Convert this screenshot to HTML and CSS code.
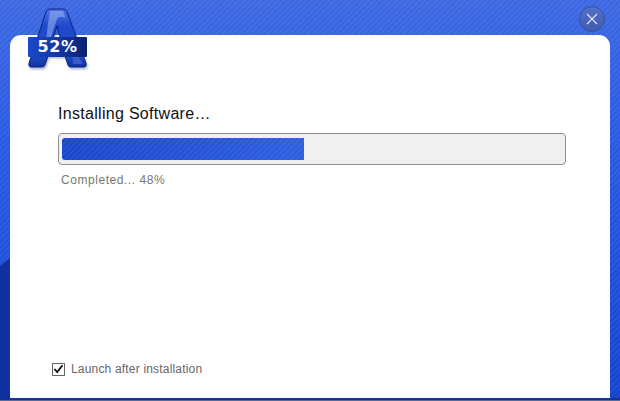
FILE: index.html
```html
<!DOCTYPE html>
<html>
	<head>
		<meta charset="UTF-8" />
		<title>Installing Software</title>
		<link rel="stylesheet" href="styles.css">
	</head>
	<body>
		<div class="window">
			<!-- logo sits over the panel edge -->
			<div class="logo">
				<svg class="logo_a" width="64" height="66" viewBox="0 0 64 66">
					<defs>
						<linearGradient id="aBlue" x1="0" y1="0" x2="0" y2="1">
							<stop offset="0" stop-color="#4d74e2"/>
							<stop offset="0.3" stop-color="#1d48cc"/>
							<stop offset="0.75" stop-color="#2450cf"/>
							<stop offset="1" stop-color="#12339f"/>
						</linearGradient>
					</defs>
					<path d="M24 2 H37 Q40 2 41 5 L60 56 Q61 60 58 60 H45 Q42.500 60 42 58 L39 49 H22 L19 58 Q18.500 60 16 60 H5 Q2 60 3 56 L20 5 Q21 2 24 2 Z M31 19 L23.500 42 H37.500 Z" fill="url(#aBlue)" fill-rule="evenodd" stroke="#0c2480" stroke-width="1"/>
					<path d="M24 4 H37 L39.500 11 Q33 8 31 12 L25 30 L20.500 30 L22 16 Z" fill="#9db4f0" opacity="0.55"/>
					<path d="M46 40 L57 57 L47 57 Z" fill="#5f83e6" opacity="0.45"/>
				</svg>
				<div class="logo_badge">52%</div>
			</div>

			<a href="#" class="btn_close">
				<svg width="12" height="12" viewBox="0 0 12 12">
					<path d="M1 1 L11 11 M11 1 L1 11" stroke="#e4e9fa" stroke-width="1.100" fill="none"/>
				</svg>
			</a>

			<div class="panel">
				<div class="title">Installing Software…</div>
				<div class="track">
					<div class="fill"></div>
				</div>
				<div class="status">Completed... 48%</div>
				<label class="launch">
					<span class="check">
						<svg width="11" height="10" viewBox="0 0 11 10">
							<path d="M1.500 5 L4.200 8 L9.500 1.200" stroke="#111" stroke-width="1.800" fill="none"/>
						</svg>
					</span>
					Launch after installation
				</label>
			</div>
		</div>
	</body>
</html>
```

FILE: styles.css
```css
*{
    box-sizing: border-box;
}

html, body{
    margin: 0;
    padding: 0;
    overflow: hidden;
}

.window{
    position: relative;
    display: flex;
    width: 620px;
    height: 401px;
    padding: 35px 10px 3px;
    font-family: "Liberation Sans", Arial, sans-serif;
    background-color: #1f4ed8;
    background-image:
        repeating-linear-gradient(135deg, rgba(255,255,255,0.05) 0 2px, rgba(255,255,255,0) 2px 4px),
        linear-gradient(180deg, #3d68e2 0, #2b5be2 130px, #1c4dd8 300px, #1442ce 401px);
}

/* darker corner at lower left */
.window::before{
    content: "";
    position: absolute;
    left: 0;
    top: 258px;
    width: 10px;
    height: 143px;
    background: #10309f;
    clip-path: polygon(0 8px, 100% 0, 100% 100%, 0 100%);
}

/* dark line at the bottom of the window */
.window::after{
    content: "";
    position: absolute;
    left: 0;
    right: 0;
    bottom: 0;
    height: 3px;
    background: linear-gradient(180deg, #12339f 0, #12339f 2px, #5a6a90 2px);
}

.panel{
    position: relative;
    display: flex;
    flex-direction: column;
    width: 600px;
    height: 363px;
    padding: 70px 44px 22px 48px;
    background-color: white;
    border-radius: 11px 11px 0 0;
}

.title{
    height: 18px;
    font-size: 16px;
    line-height: 18px;
    color: #111;
    letter-spacing: 0.3px;
}

.track{
    width: 508px;
    height: 32px;
    margin-top: 10px;
    padding: 4px 3px;
    background-color: #f0f0f0;
    border: 1px solid #8f8f8f;
    border-radius: 4px;
}

.fill{
    width: 242px;
    height: 22px;
    border-radius: 3px 0 0 3px;
    background-image:
        repeating-linear-gradient(135deg, rgba(255,255,255,0.05) 0 2px, rgba(255,255,255,0) 2px 4px),
        linear-gradient(90deg, #1a46cc 0, #2f5ee0 100%);
}

.status{
    margin-top: 8px;
    margin-left: 3px;
    font-size: 12px;
    line-height: 15px;
    color: #77776e;
    letter-spacing: 0.55px;
}

.launch{
    display: flex;
    align-items: center;
    gap: 6px;
    margin-top: auto;
    margin-left: -6px;
    font-size: 12px;
    line-height: 14px;
    color: #666;
    letter-spacing: 0.18px;
}

.check{
    display: flex;
    align-items: center;
    justify-content: center;
    width: 13px;
    height: 13px;
    border: 1px solid #666;
    background-color: white;
}

.logo{
    position: absolute;
    left: 26px;
    top: 7px;
    z-index: 2;
    width: 64px;
    height: 66px;
}

.logo_a{
    position: absolute;
    left: 0;
    top: 0;
    filter: drop-shadow(1px 2px 1px rgba(40,60,120,0.35));
}

.logo_badge{
    position: absolute;
    left: 2px;
    top: 30px;
    width: 59px;
    height: 20px;
    font-family: "DejaVu Sans", sans-serif;
    font-size: 16px;
    font-weight: bold;
    line-height: 20px;
    text-align: center;
    color: white;
    letter-spacing: 0.6px;
    border-radius: 1px;
    background: linear-gradient(90deg, #1b48c8 0, #12369f 55%, #0b2170 100%);
}

.btn_close{
    position: absolute;
    left: 579px;
    top: 6px;
    z-index: 2;
    display: flex;
    align-items: center;
    justify-content: center;
    width: 26px;
    height: 26px;
    border: 1px solid #33509f;
    border-radius: 50%;
    background: linear-gradient(180deg, #5470c8 0, #415cb0 100%);
    text-decoration: none;
}
```
